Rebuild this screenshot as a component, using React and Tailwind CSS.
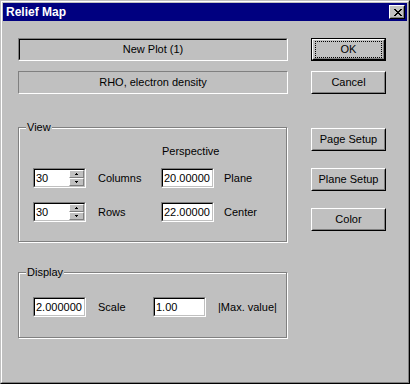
import React from "react";

function CloseX() {
  const rows = [];
  for (let i = 0; i < 7; i++) {
    const a = i < 4 ? i : 6 - i;
    const b = 6 - a;
    if (a === 3) {
      rows.push(<rect key={i} x={3} y={i} width={2} height={1} />);
    } else {
      rows.push(<rect key={i + "a"} x={a} y={i} width={2} height={1} />);
      rows.push(<rect key={i + "b"} x={b} y={i} width={2} height={1} />);
    }
  }
  return (
    <svg width="8" height="7" viewBox="0 0 8 7" shapeRendering="crispEdges" fill="#000">
      {rows}
    </svg>
  );
}

function Arrow({ up }) {
  return (
    <svg width="3" height="2" viewBox="0 0 3 2" shapeRendering="crispEdges" fill="#000">
      {up ? (
        <>
          <rect x="1" y="0" width="1" height="1" />
          <rect x="0" y="1" width="3" height="1" />
        </>
      ) : (
        <>
          <rect x="0" y="0" width="3" height="1" />
          <rect x="1" y="1" width="1" height="1" />
        </>
      )}
    </svg>
  );
}

function Btn({ label }) {
  return (
    <div className="w-[75px] h-[23px] border border-t-white border-l-white border-b-black border-r-black">
      <div className="h-full border border-t-[#c0c0c0] border-l-[#c0c0c0] border-b-[#808080] border-r-[#808080] flex items-center justify-center">
        {label}
      </div>
    </div>
  );
}

function DefBtn({ label }) {
  return (
    <div className="w-[75px] h-[23px] border border-black">
      <div className="h-full border border-t-white border-l-white border-b-black border-r-black">
        <div className="h-full border border-t-[#c0c0c0] border-l-[#c0c0c0] border-b-[#808080] border-r-[#808080] px-[1px]">
          <div className="h-full border border-dotted border-black flex items-center justify-center">
            {label}
          </div>
        </div>
      </div>
    </div>
  );
}

function Edit({ value, spin }) {
  return (
    <div className="w-[53px] h-[20px] border border-t-[#808080] border-l-[#808080] border-b-white border-r-white">
      <div className="h-full border border-t-black border-l-black border-b-[#c0c0c0] border-r-[#c0c0c0] bg-white flex items-center">
        <span className="flex-1 pl-[1px] leading-[13px]">{value}</span>
        {spin && (
          <div className="w-[15px] h-full flex flex-col">
            <div className="h-1/2 bg-[#c0c0c0] border border-t-white border-l-white border-b-[#808080] border-r-[#808080] flex items-center justify-center">
              <Arrow up />
            </div>
            <div className="h-1/2 bg-[#c0c0c0] border border-t-white border-l-white border-b-[#808080] border-r-[#808080] flex items-center justify-center">
              <Arrow />
            </div>
          </div>
        )}
      </div>
    </div>
  );
}

function Group({ label, className, children }) {
  return (
    <fieldset
      className={
        "w-[269px] border border-[#808080] shadow-[1px_1px_0_#fff,inset_1px_1px_0_#fff] " +
        className
      }
    >
      <legend className="ml-[7px] px-[1px] leading-[13px] bg-[#c0c0c0]">{label}</legend>
      {children}
    </fieldset>
  );
}

export default function App() {
  return (
    <div className="w-[410px] h-[384px] font-['Liberation_Sans',Arial,sans-serif] text-[11px] text-black border border-t-[#c0c0c0] border-l-[#c0c0c0] border-b-black border-r-black">
      <div className="h-full border border-t-white border-l-white border-b-[#808080] border-r-[#808080] bg-[#c0c0c0] p-[1px] flex flex-col">
        <div className="h-[18px] bg-[#000080] flex items-center justify-between pl-[3px] pr-[2px]">
          <span className="text-white font-bold text-[12px] leading-[14px]">Relief Map</span>
          <div className="w-[16px] h-[14px] border border-t-white border-l-white border-b-black border-r-black bg-[#c0c0c0]">
            <div className="h-full border border-t-[#c0c0c0] border-l-[#c0c0c0] border-b-[#808080] border-r-[#808080] flex items-center justify-center pl-[1px]">
              <CloseX />
            </div>
          </div>
        </div>
        <div className="flex-1 flex pl-[15px] pt-[17px] pr-[21px] gap-[23px]">
          <div className="w-[270px] flex flex-col">
            <div className="h-[23px] border border-t-[#808080] border-l-[#808080] border-b-white border-r-white">
              <div className="h-full border border-t-black border-l-black border-b-[#c0c0c0] border-r-[#c0c0c0] flex items-center justify-center">
                New Plot (1)
              </div>
            </div>
            <div className="mt-[10px] h-[23px] border border-t-[#808080] border-l-[#808080] border-b-white border-r-white flex items-center justify-center">
              RHO, electron density
            </div>

            <Group label="View" className="mt-[27px] h-[121px]">
              <div className="pl-[143px] mt-[11px] leading-[13px]">Perspective</div>
              <div className="mt-[10px] flex items-center h-[20px] pl-[14px]">
                <Edit value="30" spin />
                <span className="w-[75px] pl-[12px]">Columns</span>
                <Edit value="20.00000" />
                <span className="pl-[10px]">Plane</span>
              </div>
              <div className="mt-[14px] flex items-center h-[20px] pl-[14px]">
                <Edit value="30" spin />
                <span className="w-[75px] pl-[12px]">Rows</span>
                <Edit value="22.00000" />
                <span className="pl-[10px]">Center</span>
              </div>
            </Group>

            <Group label="Display" className="mt-[24px] h-[72px]">
              <div className="mt-[18px] flex items-center h-[20px] pl-[14px]">
                <Edit value="2.000000" />
                <span className="w-[67px] pl-[12px]">Scale</span>
                <Edit value="1.00" />
                <span className="pl-[12px]">|Max. value|</span>
              </div>
            </Group>
          </div>

          <div className="w-[75px] flex flex-col">
            <DefBtn label="OK" />
            <div className="mt-[10px]">
              <Btn label="Cancel" />
            </div>
            <div className="mt-[34px]">
              <Btn label="Page Setup" />
            </div>
            <div className="mt-[17px]">
              <Btn label="Plane Setup" />
            </div>
            <div className="mt-[17px]">
              <Btn label="Color" />
            </div>
          </div>
        </div>
      </div>
    </div>
  );
}
